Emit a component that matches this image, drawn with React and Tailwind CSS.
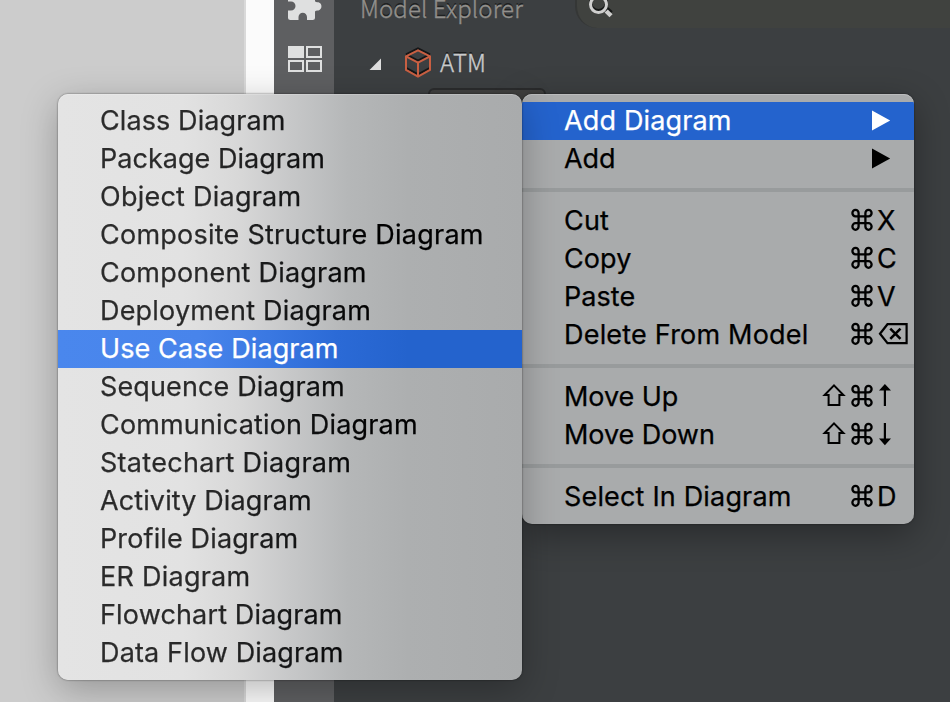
const DIAGRAMS = [
  ['Class Diagram', 'tracking-[0.1px]'],
  ['Package Diagram', 'tracking-[0.03px]'],
  ['Object Diagram', 'tracking-[0.24px]'],
  ['Composite Structure Diagram', 'tracking-[0.24px]'],
  ['Component Diagram', 'tracking-[0.21px]'],
  ['Deployment Diagram', 'tracking-[0.19px]'],
  ['Use Case Diagram', 'tracking-[0.11px]'],
  ['Sequence Diagram', 'tracking-[0.13px]'],
  ['Communication Diagram', 'tracking-[0.16px]'],
  ['Statechart Diagram', 'tracking-[0.29px]'],
  ['Activity Diagram', 'tracking-[0.11px]'],
  ['Profile Diagram', 'tracking-[0.13px]'],
  ['ER Diagram', 'tracking-[0.25px]'],
  ['Flowchart Diagram', 'tracking-[0.15px]'],
  ['Data Flow Diagram', 'tracking-[0.15px]'],
];

function CommandIcon() {
  return (
    <svg className="mr-[3px] h-[38px] w-[24px]" viewBox="0 0 24 38" fill="none" stroke="currentColor" strokeWidth="2.3">
      <path d="M8.6 14.4V11.1a3.1 3.3 0 1 0-3.1 3.3H18.5a3.1 3.3 0 1 0-3.1-3.3V24.5a3.1 3.3 0 1 0 3.1-3.3H5.5a3.1 3.3 0 1 0 3.1 3.3Z" />
    </svg>
  );
}

function ShiftIcon() {
  return (
    <svg className="mr-[4px] h-[38px] w-[24px]" viewBox="0 0 24 38" fill="none" stroke="currentColor" strokeWidth="2">
      <path d="M12 7.4 21.4 17H17.4V27H6.6V17H2.6Z" />
    </svg>
  );
}

function DeleteIcon() {
  return (
    <svg className="h-[38px] w-[37px]" viewBox="0 0 37 38" fill="none" stroke="currentColor" strokeWidth="2.2">
      <path d="M3 17.8 10.5 8.2H29.6V27.2H10.5Z" />
      <path d="M13.3 12.7 23.5 22.9M23.5 12.7 13.3 22.9" strokeWidth="2.6" />
    </svg>
  );
}

function VerticalArrow({ down }) {
  return (
    <svg className="h-[38px] w-[37px]" viewBox="0 0 37 38" fill="currentColor">
      {down ? (
        <path d="M6.8 7H9V22.5H14L7.9 29.3 2 22.5H6.8Z" />
      ) : (
        <path d="M6.8 28V12.5H2L7.9 6 14 12.5H9V28Z" />
      )}
    </svg>
  );
}

function SubmenuArrow() {
  return (
    <svg className="h-[38px] w-[42px]" viewBox="0 0 42 38" fill="currentColor">
      <path d="M0 8.6V28.4L18.2 18.5Z" />
    </svg>
  );
}

function Row({ label, shift, active, tracking, children }) {
  return (
    <div className={`flex h-[38px] items-center pl-[42px] ${active ? 'bg-[#2463cd] text-white' : 'text-black'}`}>
      <span className={`flex-1 whitespace-nowrap leading-[36px] ${tracking}`}>{label}</span>
      {shift && <ShiftIcon />}
      {children}
    </div>
  );
}

function Key({ children }) {
  return <span className="w-[37px] leading-[36px]">{children}</span>;
}

function Separator() {
  return (
    <div className="flex h-[24px] items-center">
      <div className="h-[4px] w-full bg-[#989b9c]" />
    </div>
  );
}

function ContextMenu() {
  return (
    <div className="absolute left-[522px] top-[94px] w-[392px] overflow-hidden rounded-[10px] bg-[#a9abac] py-[8px] inset-shadow-[0_1px_0_#bbbcbd]">
      <Row label="Add Diagram" tracking="tracking-[0.15px]" active><SubmenuArrow /></Row>
      <Row label="Add" tracking="tracking-[-0.1px]"><SubmenuArrow /></Row>
      <Separator />
      <Row label="Cut" tracking="tracking-[0.2px]"><CommandIcon /><Key>X</Key></Row>
      <Row label="Copy" tracking="tracking-[0.1px]"><CommandIcon /><Key>C</Key></Row>
      <Row label="Paste" tracking="tracking-[0.05px]"><CommandIcon /><Key>V</Key></Row>
      <Row label="Delete From Model" tracking="tracking-[0.2px]"><CommandIcon /><DeleteIcon /></Row>
      <Separator />
      <Row label="Move Up" tracking="tracking-[-0.05px]" shift><CommandIcon /><VerticalArrow /></Row>
      <Row label="Move Down" tracking="tracking-[-0.05px]" shift><CommandIcon /><VerticalArrow down /></Row>
      <Separator />
      <Row label="Select In Diagram" tracking="tracking-[0.17px]"><CommandIcon /><Key>D</Key></Row>
    </div>
  );
}

function DiagramMenu() {
  return (
    <div className="absolute left-[58px] top-[94px] w-[464px] overflow-hidden rounded-[10px] bg-[linear-gradient(90deg,#e4e4e4_0px,#e2e2e2_125px,#d8d8d8_180px,#c6c7c8_235px,#b5b7b8_290px,#adafb0_350px,#a9abac_464px)] py-[8px] inset-shadow-[0_1px_0_#ffffff33]">
      {DIAGRAMS.map(([label, tracking]) => {
        const active = label === 'Use Case Diagram';
        return (
          <div
            key={label}
            className={`h-[38px] ${active ? 'bg-[linear-gradient(90deg,#4a87ed_0px,#4884eb_140px,#3a78e2_210px,#2b6ad6_280px,#2463cd_350px)]' : ''}`}
          >
            <div
              className={`h-[38px] whitespace-nowrap pl-[42px] leading-[38px] ${tracking} ${active ? 'text-white' : 'bg-[linear-gradient(90deg,#2c2c2c_0px,#282828_150px,#121314_240px,#000_320px)] bg-clip-text text-transparent'}`}
            >
              {label}
            </div>
          </div>
        );
      })}
    </div>
  );
}

export default function App() {
  return (
    <div className="relative flex h-[702px] w-[950px] overflow-hidden bg-[#3c3f41] font-['Inter','Liberation_Sans',sans-serif] text-[27px] [-webkit-text-stroke:0.25px]">
      <div className="w-[244px] bg-[#cccccc]" />
      <div className="w-[30px] border-l-2 border-[#d9d9d9] bg-[#fbfbfb]" />
      <div className="flex w-[60px] flex-col items-center bg-[#5e5f61]">
        <svg className="h-[38px] w-[60px]" viewBox="0 0 60 38" fill="#dfe0e0">
          <path d="M16 0H41V1.2Q42 2.6 44.5 2.2A4.4 4.4 0 0 1 44.5 10.5Q42 10 41 11.5V17.5Q41 20 38.5 20H33V17A4.2 4.2 0 0 0 24.5 17V20H16.5Q14 20 14 17.5V10.5H17A4.5 4.5 0 0 0 17 1.5H14V0Z" />
        </svg>
        <div className="ml-[2px] mt-[8px] grid grid-cols-2 gap-[2px]">
          <div className="h-[12px] w-[16px] bg-[#dfe0e0]" />
          <div className="h-[12px] w-[16px] border-2 border-[#dfe0e0]" />
          <div className="h-[12px] w-[16px] border-2 border-[#dfe0e0]" />
          <div className="h-[12px] w-[16px] border-2 border-[#dfe0e0]" />
        </div>
      </div>
      <div className="flex-1 font-['Noto_Sans_CJK_SC',sans-serif] text-[24px] font-light [-webkit-text-stroke:0.4px]">
        <div className="flex h-[28px] justify-between pl-[26px]">
          <span className="-mt-[10px] h-[36px] whitespace-nowrap leading-[36px] tracking-[0.1px] text-[#92908c] [text-shadow:0_-2px_0_#1f2122]">Model Explorer</span>
          <div className="h-[28px] w-[375px] rounded-bl-[22px] border-l-2 border-[#353736] bg-[#40423f]">
            <svg className="h-[28px] w-[50px]" viewBox="0 0 50 28" fill="none">
              <circle cx="21.5" cy="2.5" r="8" stroke="#151716" strokeWidth="3" />
              <path d="m29 8.5 5 4.5" stroke="#151716" strokeWidth="5" />
              <circle cx="21.5" cy="4.5" r="8" stroke="#cfcfce" strokeWidth="3" />
              <path d="m29.2 11 4.8 4.8" stroke="#cfcfce" strokeWidth="4.4" />
            </svg>
          </div>
        </div>
        <div className="flex h-[60px] pl-[34px]">
          <svg className="h-[60px] w-[72px]" viewBox="0 0 72 60" fill="none">
            <path d="M13 30.5V42H1.5Z" fill="#dedede" />
            <g strokeWidth="2">
              <path d="M38 26.3 50 20.3 62 26.3M38 26.3 50 32.6 62 26.3M38 40 50 46.4 62 40" stroke="#151617" />
              <path d="M50 22.3 62 28.3V42L50 48.6 38 42V28.3ZM38 28.3 50 34.7 62 28.3M50 34.7V48.6" stroke="#c95f42" />
            </g>
          </svg>
          <span className="mt-[16px] leading-[36px] text-[#c9cacb] [text-shadow:0_-2px_0_#1b1d1e]">ATM</span>
        </div>
        <div className="ml-[94px] h-[30px] w-[118px] rounded-[6px] border-2 border-[#2b2c2d] bg-[#414140]" />
      </div>
      <div className="absolute left-[522px] top-[94px] h-[430px] w-[392px] rounded-[10px] shadow-[0_0_2px_#0008,0_10px_36px_#0005]" />
      <ContextMenu />
      <div className="absolute left-[58px] top-[94px] h-[586px] w-[464px] rounded-[10px] shadow-[0_0_2px_#0009,0_10px_36px_#0004]" />
      <DiagramMenu />
    </div>
  );
}
